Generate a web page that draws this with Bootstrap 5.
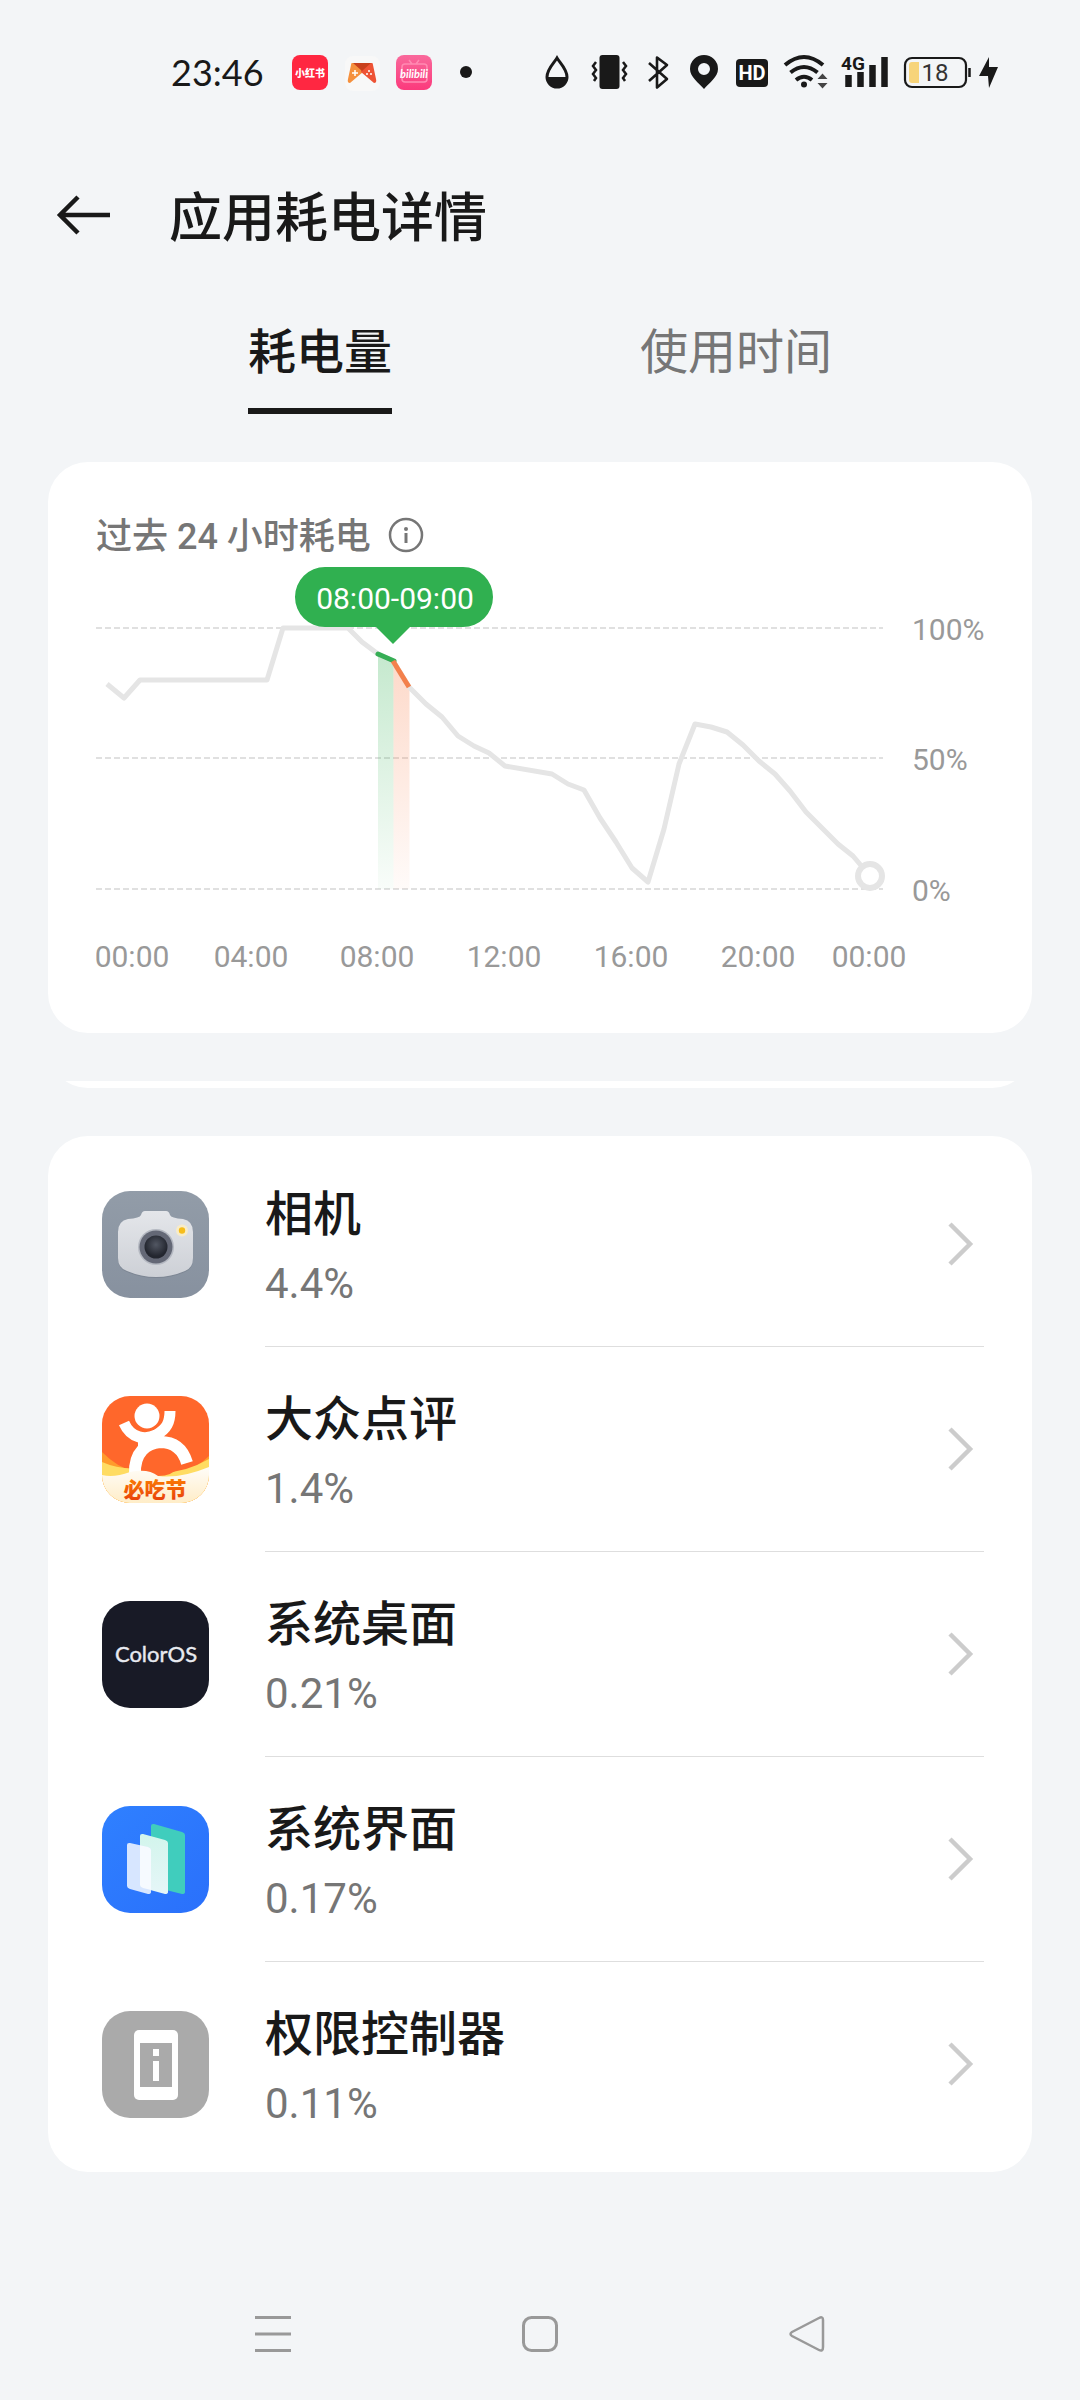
<!DOCTYPE html>
<html lang="zh-CN">
<head>
<meta charset="utf-8">
<meta name="viewport" content="width=device-width, initial-scale=1">
<title>应用耗电详情</title>
<link href="https://cdn.jsdelivr.net/npm/bootstrap@5.3.0/dist/css/bootstrap.min.css" rel="stylesheet">
<style>
  :root { --ink: #191919; --soft: #767676; --page: #f3f5f7; }
  body { background: var(--page); color: var(--ink); font-family: Roboto, "Noto Sans CJK SC", sans-serif; }
  svg { display: block; flex-shrink: 0; }
  .status-bar { padding: 50px 82px 0 171px; height: 94px; }
  .clock { font: 400 36px/44px Lato, sans-serif; width: 120px; }
  .app-bar { padding: 81px 48px 0 56px; gap: 57px; }
  .app-bar h1 { font-size: 53px; line-height: 72px; font-weight: 500; padding-top: 8px; }
  .tab-bar { margin-top: 66px; }
  .tab-item { font-size: 48px; line-height: 64px; padding: 0 0 23px; border: 0; border-bottom: 6px solid transparent; background: none; color: var(--soft); }
  .tab-item.active { color: var(--ink); font-weight: 500; border-bottom-color: var(--ink); }
  .panel { margin: 48px 48px 0; background: #fff; border-radius: 40px; }
  .chart-panel { padding: 50px 48px 48px; }
  .chart-panel h2 { font-size: 36px; line-height: 50px; font-weight: 500; color: var(--soft); }
  .chart text { font-size: 30px; fill: #999; }
  .chart .tip-text { fill: #fff; }
  .panel-edge { margin: 48px 48px 0; height: 7px; }
  .panel-edge div { height: 80px; background: #fff; border-radius: 40px; }
  .app-list { padding: 6px 0 5px; }
  .app-row { padding: 0 48px 0 54px; gap: 56px; color: var(--ink); }
  .app-body { height: 205px; border-bottom: 1px solid #dedede; padding-right: 10px; }
  .app-row:last-child .app-body { border-color: transparent; }
  .app-name { font-size: 48px; line-height: 64px; font-weight: 500; margin-top: 3px; }
  .app-pct { font-size: 42px; line-height: 50px; color: var(--soft); margin-top: 12px; }
  .sys-nav { padding: 0 0 48px; gap: 231px; }
</style>
</head>
<body>
<div class="d-flex flex-column min-vh-100">

  <header>
    <div class="status-bar d-flex align-items-center justify-content-between">
      <div class="d-flex align-items-center">
        <span class="clock">23:46</span>
        <svg width="182" height="44" viewBox="291 50 182 44" aria-hidden="true">
          <defs><linearGradient id="bili" x2="0" y2="1"><stop stop-color="#f9699c"/><stop offset="1" stop-color="#fb3a7c"/></linearGradient></defs>
          <rect x="292" y="55" width="36" height="35" rx="8" fill="#ff2741"/>
          <text x="310" y="77" text-anchor="middle" font-size="10" font-weight="900" fill="#fff" font-family="Noto Sans CJK SC">小红书</text>
          <rect x="345" y="56" width="35" height="35" rx="8" fill="#f8f8f8"/>
          <path d="M352 63h10l1 9-13 11q-3 0-2-4l3-14q0-2 1-2z" fill="#f5903d"/>
          <path d="M372 63h-10l-1 9 13 11q3 0 2-4l-3-14q0-2-1-2z" fill="#ee5335"/>
          <path d="M353 63h18l-9 8z" fill="#c8401c"/>
          <path d="M355 70v6M352 73h6" stroke="#fff" stroke-width="1.5"/>
          <circle cx="369" cy="71" r="1" fill="#fff"/><circle cx="367" cy="74" r="1" fill="#fff"/><circle cx="371" cy="74" r="1" fill="#fff"/>
          <rect x="396" y="55" width="36" height="35" rx="8" fill="url(#bili)"/>
          <path d="M409 60l3 4M419 60l-3 4M405 64h19q3 0 3 3v12q0 3-3 3h-19q-3 0-3-3V67q0-3 3-3z" fill="none" stroke="#ff8ab2" stroke-width="1.5"/>
          <text x="414" y="78" text-anchor="middle" font-size="11" font-weight="700" font-style="italic" fill="#fff" font-family="Lato">bilibili</text>
          <circle cx="466" cy="72" r="6" fill="#191919"/>
        </svg>
      </div>
      <div class="d-flex align-items-center gap-2" aria-hidden="true">
        <svg width="40" height="44" viewBox="540 50 40 44"><path d="M557 58c-3 5-10 11-10 19a10 10 0 0 0 20 0c0-8-7-14-10-19z" fill="none" stroke="#191919" stroke-width="3"/><path d="M547 77h20a10 10 0 0 1-20 0z" fill="#191919"/></svg>
        <svg width="49" height="44" viewBox="588 50 49 44"><rect x="599.5" y="55" width="20" height="34" rx="3" fill="#191919"/><path d="M596 62l-3 4 3 4-3 4 3 4-2 3M623 62l3 4-3 4 3 4-3 4 2 3" fill="none" stroke="#191919" stroke-width="2.5"/></svg>
        <svg width="34" height="44" viewBox="645 50 34 44"><path d="M649 63l18 16-10 8.500V57.500l10 7.500-18 16" fill="none" stroke="#191919" stroke-width="2.600" stroke-linejoin="round"/></svg>
        <svg width="37" height="44" viewBox="687 50 37 44"><path fill-rule="evenodd" d="M704 55a14 14 0 0 0-14 14c0 8 9 14 14 20 5-6 14-12 14-20a14 14 0 0 0-14-14zm0 8a6 6 0 1 1 0 12 6 6 0 0 1 0-12z" fill="#191919"/></svg>
        <svg width="40" height="44" viewBox="732 50 40 44"><rect x="736" y="59" width="32" height="28" rx="4" fill="#191919"/><text x="752" y="80" text-anchor="middle" font-size="20" font-weight="700" fill="#fff" font-family="Roboto">HD</text></svg>
        <svg width="50" height="44" viewBox="780 50 50 44"><g fill="none" stroke="#191919" stroke-width="4"><path d="M785 65q19-16 38 0"/><path d="M790.5 72.5q13.5-11 27 0"/><path d="M796 80q8-6.5 16 0"/></g><circle cx="804" cy="84.5" r="3" fill="#191919"/><path d="M817.5 79l5-5.5 5 5.5zM817.5 83l5 5.5 5-5.5z" fill="#444"/></svg>
        <svg width="57" height="44" viewBox="838 50 57 44"><path d="M848.5 75v12M860.5 72v15M872.5 65v22M884.5 57v30" stroke="#191919" stroke-width="6.5"/><text x="841" y="70" font-size="19" font-weight="700" fill="#191919" stroke="#f3f5f7" stroke-width="1.5" paint-order="stroke" font-family="Roboto">4G</text></svg>
        <svg width="68" height="44" viewBox="903 50 68 44"><rect x="905" y="58" width="61" height="29" rx="7" fill="none" stroke="#191919" stroke-width="2.2"/><path d="M969.5 68v9" stroke="#191919" stroke-width="2.5"/><path d="M912 62h7v21h-7q-3 0-3-3V65q0-3 3-3z" fill="#f7d47a"/><text x="935" y="81" text-anchor="middle" font-size="24" fill="#333" font-family="Roboto">18</text></svg>
        <svg width="19" height="44" viewBox="979 50 19 44"><path d="M989 57l-10 19h9l1 12 9-21h-9z" fill="#191919"/></svg>
      </div>
    </div>

    <div class="app-bar d-flex align-items-center">
      <a href="#" aria-label="返回"><svg width="56" height="44" viewBox="0 0 56 44"><path d="M54 22H4M22 4L4 22l18 18" fill="none" stroke="#191919" stroke-width="4.5"/></svg></a>
      <h1 class="m-0">应用耗电详情</h1>
    </div>

    <nav class="tab-bar d-flex justify-content-evenly">
      <button type="button" class="tab-item active" aria-current="page">耗电量</button>
      <button type="button" class="tab-item">使用时间</button>
    </nav>
  </header>

  <main>
    <section class="panel chart-panel">
      <div class="d-flex align-items-center">
        <h2 class="m-0">过去 24 小时耗电</h2>
        <button type="button" class="btn p-0 border-0 ms-3" aria-label="说明"><svg width="40" height="40" viewBox="0 0 40 40"><circle cx="19" cy="18" r="16" fill="none" stroke="#767676" stroke-width="2.5"/><circle cx="19" cy="12" r="2" fill="#767676"/><path d="M19 16v10" stroke="#767676" stroke-width="3"/></svg></button>
      </div>
      <svg class="chart w-100" viewBox="96 562 888 423" role="img" aria-label="过去 24 小时耗电曲线">
        <defs>
          <linearGradient id="gGreen" x2="0" y2="1"><stop stop-color="#30b050" stop-opacity=".28"/><stop offset="1" stop-color="#30b050" stop-opacity=".03"/></linearGradient>
          <linearGradient id="gOrange" x2="0" y2="1"><stop stop-color="#f87840" stop-opacity=".28"/><stop offset="1" stop-color="#f87840" stop-opacity=".03"/></linearGradient>
        </defs>
        <path d="M96 628H883M96 758H883M96 889H883" stroke="#e0e0e0" stroke-width="2" stroke-dasharray="6 3"/>
        <path d="M378 654L393.5 661V889H378z" fill="url(#gGreen)"/>
        <path d="M393.5 661L409.5 687V889H393.5z" fill="url(#gOrange)"/>
        <polyline fill="none" stroke="#e5e5e5" stroke-width="5" stroke-linejoin="round" points="107,684 124,698 140,680 267,680 283,628 348,628 362,642 378,654 393,661 409,687 426,704 442,717 458,736 474,746 489,753 505,766 552,774 568,784 584,790 600,818 616,842 632,868 648,882 664,829 679,764 695,724 711,727 727,732 743,745 759,761 775,774 790,791 806,812 822,828 838,844 853,856 870,876"/>
        <path d="M378 654L394 661" stroke="#36ae55" stroke-width="5" stroke-linecap="round"/>
        <path d="M393 661L409 687" stroke="#f3804c" stroke-width="5"/>
        <circle cx="870" cy="876" r="12" fill="#fff" stroke="#e5e5e5" stroke-width="6"/>
        <path d="M325 567H463a30 30 0 0 1 0 60H410L393 644 376 627H325a30 30 0 0 1 0-60z" fill="#30b050"/>
        <text class="tip-text" x="395" y="609" text-anchor="middle">08:00-09:00</text>
        <text x="912" y="640">100%</text><text x="912" y="770">50%</text><text x="912" y="901">0%</text>
        <g text-anchor="middle">
          <text x="132" y="967">00:00</text><text x="251" y="967">04:00</text><text x="377" y="967">08:00</text><text x="504" y="967">12:00</text><text x="631" y="967">16:00</text><text x="758" y="967">20:00</text><text x="869" y="967">00:00</text>
        </g>
      </svg>
    </section>

    <div class="panel-edge overflow-hidden d-flex align-items-end"><div class="w-100 flex-shrink-0"></div></div>

    <section class="panel app-list">
      <a href="#" class="app-row d-flex align-items-center text-decoration-none">
        <svg width="107" height="107" viewBox="0 0 107 107" aria-hidden="true">
          <defs>
            <linearGradient id="camBg" x2="0" y2="1"><stop stop-color="#929ca8"/><stop offset="1" stop-color="#87919f"/></linearGradient>
            <linearGradient id="camBody" x2="0" y2="1"><stop stop-color="#e4e6ea"/><stop offset="1" stop-color="#cdd0d6"/></linearGradient>
            <radialGradient id="lens" cy=".4"><stop stop-color="#525763"/><stop offset="1" stop-color="#23262f"/></radialGradient>
          </defs>
          <rect width="107" height="107" rx="28" fill="url(#camBg)"/>
          <path d="M26 29Q38 28 39 25q1-4 4-4h21q3 0 4 4 1 3 13 4 10 2 10 13v26q0 10-8 13-14 6-29 6t-29-6q-9-3-9-13V42q0-11 10-13z" fill="#6d7683" opacity=".45"/>
          <path d="M26 28Q38 27 39 24q1-4 4-4h21q3 0 4 4 1 3 13 4 10 2 10 13v26q0 10-8 13-14 6-29 6t-29-6q-9-3-9-13V41q0-11 10-13z" fill="url(#camBody)"/>
          <circle cx="54" cy="56" r="18" fill="#b5b9c2"/><circle cx="54" cy="56" r="16.5" fill="#646876"/><circle cx="54" cy="56" r="11.5" fill="url(#lens)"/>
          <circle cx="80" cy="39.5" r="6" fill="#f8ecc8"/><circle cx="80" cy="39.5" r="3.2" fill="#f6bd1c"/>
        </svg>
        <div class="app-body flex-grow-1 d-flex align-items-center justify-content-between">
          <div><div class="app-name">相机</div><div class="app-pct">4.4%</div></div>
          <svg width="26" height="44" viewBox="0 0 26 44" aria-hidden="true"><path d="M2 2l20 20L2 42" fill="none" stroke="#ccc" stroke-width="4.5"/></svg>
        </div>
      </a>
      <a href="#" class="app-row d-flex align-items-center text-decoration-none">
        <svg width="107" height="107" viewBox="0 0 107 107" aria-hidden="true">
          <defs>
            <clipPath id="clipDp"><rect width="107" height="107" rx="28"/></clipPath>
            <linearGradient id="cream" x2="0" y2="1"><stop stop-color="#fffdf8"/><stop offset="1" stop-color="#ffedc8"/></linearGradient>
            <linearGradient id="fest" x2="0" y2="1"><stop stop-color="#ff8a00"/><stop offset="1" stop-color="#e63a0c"/></linearGradient>
          </defs>
          <g clip-path="url(#clipDp)">
            <rect width="107" height="107" fill="#ff672b"/>
            <path d="M0 56Q16 72 30 74L76 77Q94 73 107 60V107H0z" fill="#ff9b2c"/>
            <path d="M0 66Q18 74 38 72 70 84 107 63V107H0z" fill="#ffdc62"/>
            <path d="M38 78V66Q46 52 58 52 72 53 79 70 70 80 56 80z" fill="#ff672b"/>
            <g fill="none" stroke="#fff"><path d="M22 27C29 43 44 44 54 39 65 33 68 26 68 15" stroke-width="11"/><path d="M33 78C32 56 45 47 58 46 72 46 81 53 85 67" stroke-width="12"/></g>
            <path d="M36 39h24l8 6-32 8z" fill="#fff"/>
            <circle cx="45" cy="20" r="15" fill="#ff672b"/><circle cx="45" cy="20" r="12.5" fill="#fff"/>
            <path d="M0 79Q12 82 28 76 46 72 56 80 78 83 107 71V107H0z" fill="url(#cream)"/>
          </g>
          <text x="53" y="101" text-anchor="middle" font-size="21" font-weight="900" font-family="Noto Sans CJK SC" fill="url(#fest)">必吃节</text>
        </svg>
        <div class="app-body flex-grow-1 d-flex align-items-center justify-content-between">
          <div><div class="app-name">大众点评</div><div class="app-pct">1.4%</div></div>
          <svg width="26" height="44" viewBox="0 0 26 44" aria-hidden="true"><path d="M2 2l20 20L2 42" fill="none" stroke="#ccc" stroke-width="4.5"/></svg>
        </div>
      </a>
      <a href="#" class="app-row d-flex align-items-center text-decoration-none">
        <svg width="107" height="107" viewBox="0 0 107 107" aria-hidden="true">
          <rect width="107" height="107" rx="28" fill="#181a26"/>
          <text x="54" y="61" text-anchor="middle" font-size="22" font-family="Lato" fill="#e8eaf0" stroke="#e8eaf0" stroke-width=".4">ColorOS</text>
        </svg>
        <div class="app-body flex-grow-1 d-flex align-items-center justify-content-between">
          <div><div class="app-name">系统桌面</div><div class="app-pct">0.21%</div></div>
          <svg width="26" height="44" viewBox="0 0 26 44" aria-hidden="true"><path d="M2 2l20 20L2 42" fill="none" stroke="#ccc" stroke-width="4.5"/></svg>
        </div>
      </a>
      <a href="#" class="app-row d-flex align-items-center text-decoration-none">
        <svg width="107" height="107" viewBox="0 0 107 107" aria-hidden="true">
          <defs>
            <linearGradient id="uiBg" x2="1" y2="1"><stop stop-color="#2f80ff"/><stop offset="1" stop-color="#2a70fb"/></linearGradient>
            <linearGradient id="uiMid" x2="0" y2="1"><stop stop-color="#d2f5ec"/><stop offset="1" stop-color="#e6f6f8"/></linearGradient>
          </defs>
          <rect width="107" height="107" rx="28" fill="url(#uiBg)"/>
          <path d="M49 20q0-2.500 3-2L80 26q3 1 3 3V86q0 2-3 2L52 81q-3-1-3-3z" fill="#40cdbd"/>
          <path d="M38 30q0-2.500 3-2L63 34q3 1 3 3V86q0 2-3 2L41 82q-3-1-3-3z" fill="url(#uiMid)"/>
          <path d="M25 39q0-2.500 3-2L46 41q3 1 3 3V86q0 2-3 2L28 83q-3-1-3-3z" fill="#d7e6ff"/>
          <path d="M38 39.200L46 41q3 1 3 3V84L41 82q-3-1-3-3z" fill="#f6faff"/>
        </svg>
        <div class="app-body flex-grow-1 d-flex align-items-center justify-content-between">
          <div><div class="app-name">系统界面</div><div class="app-pct">0.17%</div></div>
          <svg width="26" height="44" viewBox="0 0 26 44" aria-hidden="true"><path d="M2 2l20 20L2 42" fill="none" stroke="#ccc" stroke-width="4.5"/></svg>
        </div>
      </a>
      <a href="#" class="app-row d-flex align-items-center text-decoration-none">
        <svg width="107" height="107" viewBox="0 0 107 107" aria-hidden="true">
          <rect width="107" height="107" rx="28" fill="#aaa"/>
          <rect x="32" y="19" width="44" height="70" rx="5" fill="#fff"/>
          <path d="M38 32h32v44H38z" fill="#aaa"/>
          <path d="M51 38h6v7h-6zM51 50h6v20h-6z" fill="#fff"/>
        </svg>
        <div class="app-body flex-grow-1 d-flex align-items-center justify-content-between">
          <div><div class="app-name">权限控制器</div><div class="app-pct">0.11%</div></div>
          <svg width="26" height="44" viewBox="0 0 26 44" aria-hidden="true"><path d="M2 2l20 20L2 42" fill="none" stroke="#ccc" stroke-width="4.5"/></svg>
        </div>
      </a>
    </section>
  </main>

  <footer class="sys-nav mt-auto d-flex justify-content-center">
    <button type="button" class="btn p-0 border-0" aria-label="最近任务"><svg width="36" height="36" viewBox="0 0 36 36"><path d="M0 1.500h36M0 18h36M0 34.500h36" stroke="#999" stroke-width="3"/></svg></button>
    <button type="button" class="btn p-0 border-0" aria-label="主屏幕"><svg width="36" height="36" viewBox="0 0 36 36"><rect x="1.5" y="1.5" width="33" height="33" rx="8" fill="none" stroke="#999" stroke-width="3"/></svg></button>
    <button type="button" class="btn p-0 border-0" aria-label="返回上一级"><svg width="36" height="36" viewBox="0 0 36 36"><path d="M3 16L30 2Q34 0 34 4V31Q34 36 30 34L3 20Q0 18 3 16z" fill="none" stroke="#999" stroke-width="2.5"/></svg></button>
  </footer>
</div>
<script src="https://cdn.jsdelivr.net/npm/bootstrap@5.3.0/dist/js/bootstrap.bundle.min.js"></script>
</body>
</html>
